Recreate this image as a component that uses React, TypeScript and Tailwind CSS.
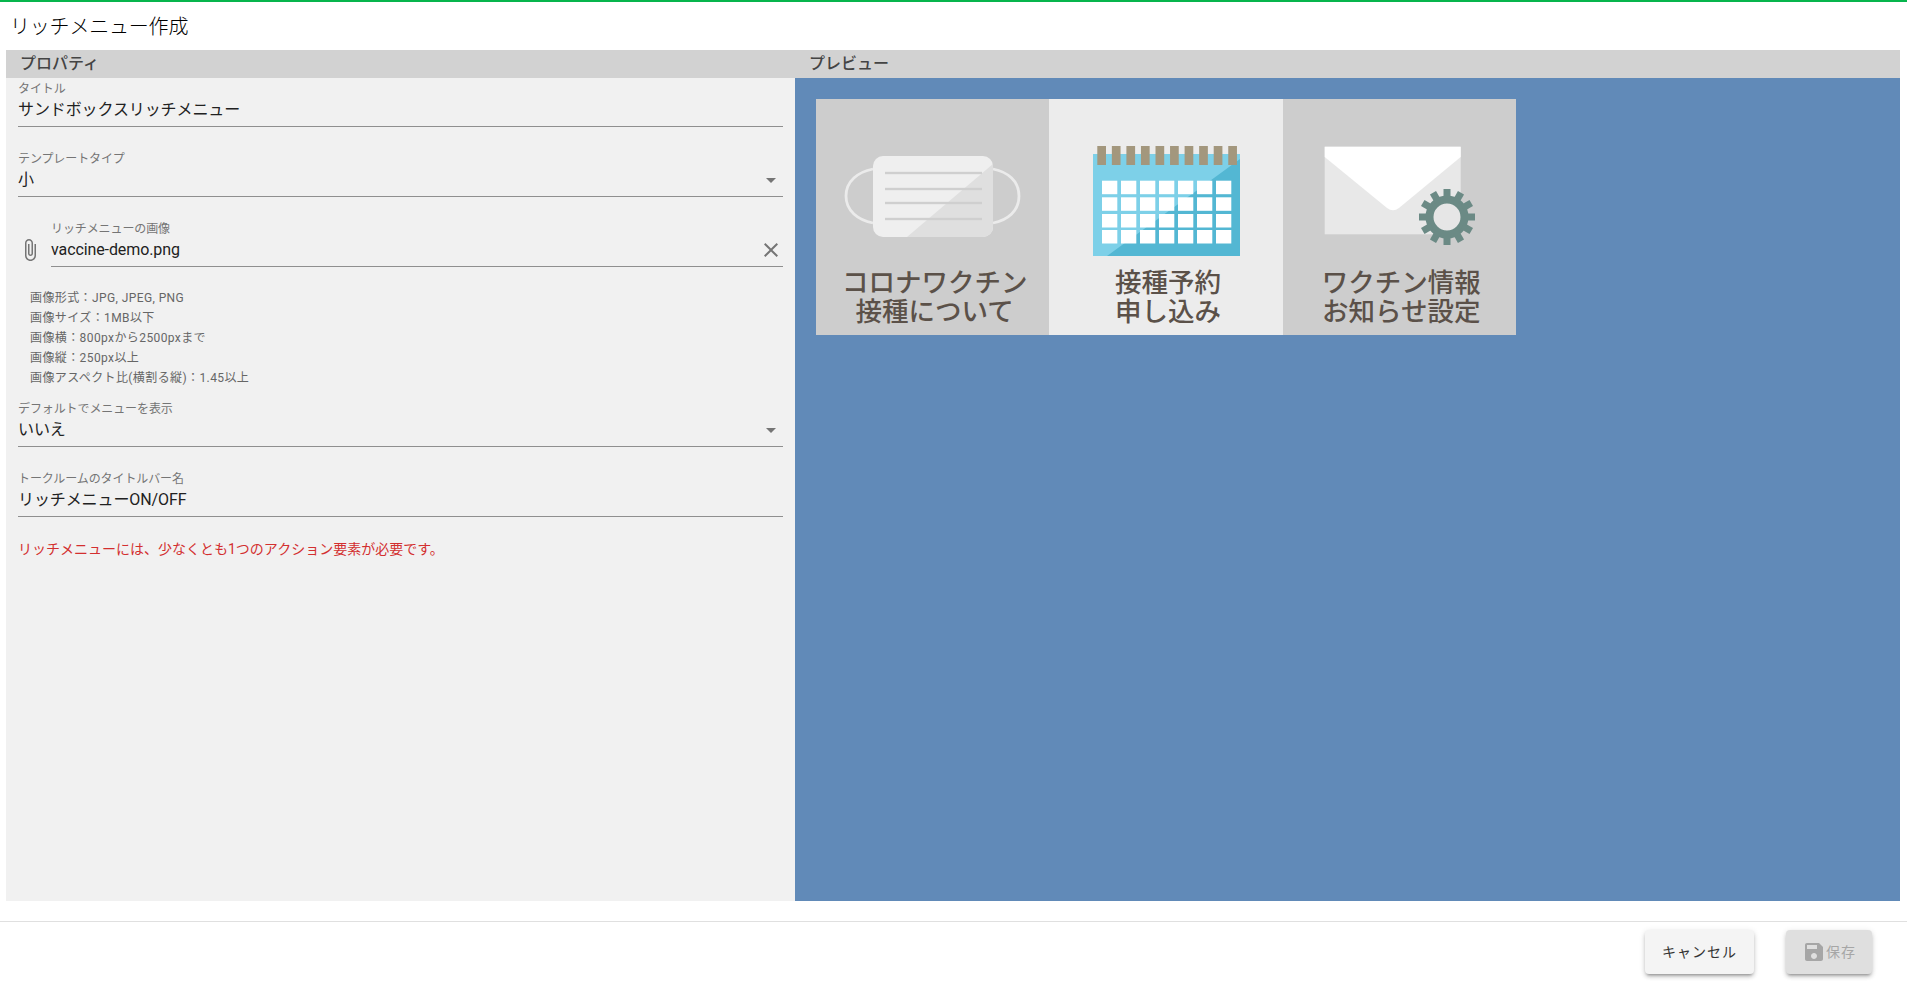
import React from 'react';

const JP = "font-['Roboto','Noto_Sans_CJK_JP',sans-serif]";

const AttachIcon = () => (
  <svg viewBox="0 0 24 24" className="w-6 h-6 fill-[#757575] shrink-0">
    <path d="M16.5 6v11.5c0 2.21-1.79 4-4 4s-4-1.79-4-4V5c0-1.38 1.12-2.5 2.5-2.5s2.5 1.12 2.5 2.5v10.5c0 .55-.45 1-1 1s-1-.45-1-1V6H10v9.5c0 1.38 1.12 2.5 2.5 2.5s2.5-1.12 2.5-2.5V5c0-2.21-1.79-4-4-4S7 2.79 7 5v12.5c0 3.04 2.46 5.5 5.5 5.5s5.5-2.46 5.5-5.5V6h-1.5z" />
  </svg>
);

const CloseIcon = () => (
  <svg viewBox="0 0 24 24" className="w-6 h-6 fill-[#757575] shrink-0">
    <path d="M19 6.41L17.59 5 12 10.59 6.41 5 5 6.41 10.59 12 5 17.59 6.41 19 12 13.41 17.59 19 19 17.59 13.41 12z" />
  </svg>
);

const ArrowIcon = () => (
  <svg viewBox="0 0 24 24" className="w-6 h-6 fill-[#757575] shrink-0">
    <path d="M7 10l5 5 5-5z" />
  </svg>
);

const SaveIcon = () => (
  <svg viewBox="0 0 24 24" className="w-6 h-6 fill-[#a6a6a6] shrink-0">
    <path d="M17 3H5c-1.11 0-2 .9-2 2v14c0 1.1.89 2 2 2h14c1.1 0 2-.9 2-2V7l-4-4zm-5 16c-1.66 0-3-1.34-3-3s1.34-3 3-3 3 1.34 3 3-1.34 3-3 3zm3-10H5V5h10v4z" />
  </svg>
);

interface FieldProps {
  label: string;
  value: string;
  right?: React.ReactNode;
  className?: string;
}

const Field: React.FC<FieldProps> = ({ label, value, right, className = '' }) => (
  <div className={`border-b border-[#8f8f8f] h-[49px] ${className}`}>
    <div className="h-[22px] pt-px text-xs leading-5 tracking-[-0.1px] text-[#757575]">{label}</div>
    <div className="flex items-center justify-between h-5 text-base leading-5 tracking-[-0.1px] text-[#212121]">
      <span>{value}</span>
      {right}
    </div>
  </div>
);

const MenuCell: React.FC<{ bg: string; lines: [string, string]; children: React.ReactNode }> = ({ bg, lines, children }) => (
  <div className={`w-1/3 h-full flex flex-col ${bg}`}>
    <svg viewBox="0 0 233.33 167" className="w-full h-[167px] shrink-0">
      {children}
    </svg>
    <div className="pl-1 text-center text-[26.5px] leading-[29px] font-medium text-[#5b5149] whitespace-nowrap font-['Noto_Sans_CJK_JP',sans-serif]">
      <div>{lines[0]}</div>
      <div>{lines[1]}</div>
    </div>
  </div>
);

const MaskIcon = () => (
  <>
    <path d="M57 70 C42 73 30 82 30 97 S42 121 57 124" fill="none" stroke="#ebebeb" strokeWidth="2.8" />
    <path d="M177 70 C192 73 203 82 203 97 S192 121 177 124" fill="none" stroke="#ebebeb" strokeWidth="2.8" />
    <rect x="57" y="57" width="120" height="81" rx="10" fill="#efefef" />
    <path d="M177 65 L177 128 A10 10 0 0 1 167 138 L91 138 Z" fill="#dfdfdf" />
    {[74, 90, 104, 120].map(y => (
      <rect key={y} x="69" y={y - 1.2} width="97" height="2.4" fill="#cfcfcf" />
    ))}
  </>
);

const CalendarIcon = () => (
  <>
    <rect x="44" y="55" width="147" height="102" fill="#7dd0e8" />
    <path d="M191 60 L191 157 L58 157 Z" fill="#53b7d3" />
    {Array.from({ length: 10 }).map((_, i) => (
      <rect key={i} x={48.3 + i * 14.55} y="47" width="8.7" height="19" fill="#a3977d" />
    ))}
    {[81.7, 98.3, 115, 131].map(y =>
      [0, 1, 2, 3, 4, 5, 6].map(c => (
        <rect key={`${y}-${c}`} x={53 + c * 19} y={y} width="15.3" height="13.5" fill="#ffffff" />
      ))
    )}
  </>
);

const MailIcon = () => (
  <>
    <rect x="41.7" y="47.7" width="136" height="87.6" fill="#e8e8e8" />
    <path d="M41.7 47.7 L177.7 47.7 L177.7 58 L116 109 Q110 113.500 104 109 L41.7 58 Z" fill="#ffffff" />
    <circle cx="164" cy="118" r="17.500" fill="#e6e6e6" stroke="#6b8a85" strokeWidth="8" />
    {Array.from({ length: 12 }).map((_, i) => (
      <rect key={i} x="160.500" y="90" width="7" height="10" fill="#6b8a85" transform={`rotate(${i * 30} 164 118)`} />
    ))}
  </>
);

const HELP_LINES = [
  '画像形式：JPG, JPEG, PNG',
  '画像サイズ：1MB以下',
  '画像横：800pxから2500pxまで',
  '画像縦：250px以上',
  '画像アスペクト比(横割る縦)：1.45以上',
];

const BUTTON_SHADOW = 'shadow-[0_3px_3px_-2px_rgba(0,0,0,0.3),0_3px_4px_0_rgba(0,0,0,0.16),0_1px_6px_0_rgba(0,0,0,0.1)]';

const App: React.FC = () => {
  return (
    <div className={`h-screen flex flex-col overflow-hidden bg-white border-t-2 border-[#06b54c] ${JP}`}>
      <div className="h-12 shrink-0 pl-[10px] pt-px flex items-center text-xl font-light tracking-[-0.2px] text-black">
        リッチメニュー作成
      </div>

      <div className="flex h-[851px] shrink-0 pl-[6px] pr-[7px]">
        {/* Properties */}
        <div className="w-[789px] flex flex-col bg-[#f1f1f1]">
          <div className="h-7 shrink-0 pl-[14px] flex items-center bg-[#d2d2d2] text-base font-medium text-[#444444]">
            プロパティ
          </div>
          <div className="px-3">
            <Field label="タイトル" value="サンドボックスリッチメニュー" className="mb-[21px]" />
            <Field label="テンプレートタイプ" value="小" right={<ArrowIcon />} className="mb-[21px]" />
            <div className="flex">
              <div className="w-[33px] pt-5">
                <AttachIcon />
              </div>
              <Field label="リッチメニューの画像" value="vaccine-demo.png" right={<CloseIcon />} className="flex-1" />
            </div>
            <div className="pt-[21px] pl-3 pb-[10px]">
              {HELP_LINES.map(line => (
                <div key={line} className="h-5 text-xs leading-5 tracking-[0.4px] text-[#666666]">{line}</div>
              ))}
            </div>
            <Field label="デフォルトでメニューを表示" value="いいえ" right={<ArrowIcon />} className="mb-[21px]" />
            <Field label="トークルームのタイトルバー名" value="リッチメニューON/OFF" />
            <div className="mt-[22px] text-sm leading-5 text-[#d32f2f]">
              リッチメニューには、少なくとも1つのアクション要素が必要です。
            </div>
          </div>
        </div>

        {/* Preview */}
        <div className="flex-1 flex flex-col">
          <div className="h-7 shrink-0 pl-[14px] flex items-center bg-[#d2d2d2] text-base font-medium text-[#444444]">
            プレビュー
          </div>
          <div className="flex-1 p-[21px] bg-[#618ab8]">
            <div className="flex w-[700px] h-[236px] overflow-hidden">
              <MenuCell bg="bg-[#cdcdcd]" lines={['コロナワクチン', '接種について']}>
                <MaskIcon />
              </MenuCell>
              <MenuCell bg="bg-[#ececec]" lines={['接種予約', '申し込み']}>
                <CalendarIcon />
              </MenuCell>
              <MenuCell bg="bg-[#cdcdcd]" lines={['ワクチン情報', 'お知らせ設定']}>
                <MailIcon />
              </MenuCell>
            </div>
          </div>
        </div>
      </div>

      <div className="mt-5 flex-1 border-t border-[#e0e0e0] pt-2 pr-[35px] flex justify-end gap-8">
        <button className={`w-[109px] h-11 rounded bg-[#f4f4f4] text-sm tracking-[1px] text-[#333333] ${BUTTON_SHADOW}`}>
          キャンセル
        </button>
        <button className={`w-[86px] h-11 rounded bg-[#dfdfdf] text-sm tracking-[1px] text-[#a6a6a6] flex items-center justify-center ${BUTTON_SHADOW}`}>
          <SaveIcon />
          保存
        </button>
      </div>
    </div>
  );
};

export default App;
